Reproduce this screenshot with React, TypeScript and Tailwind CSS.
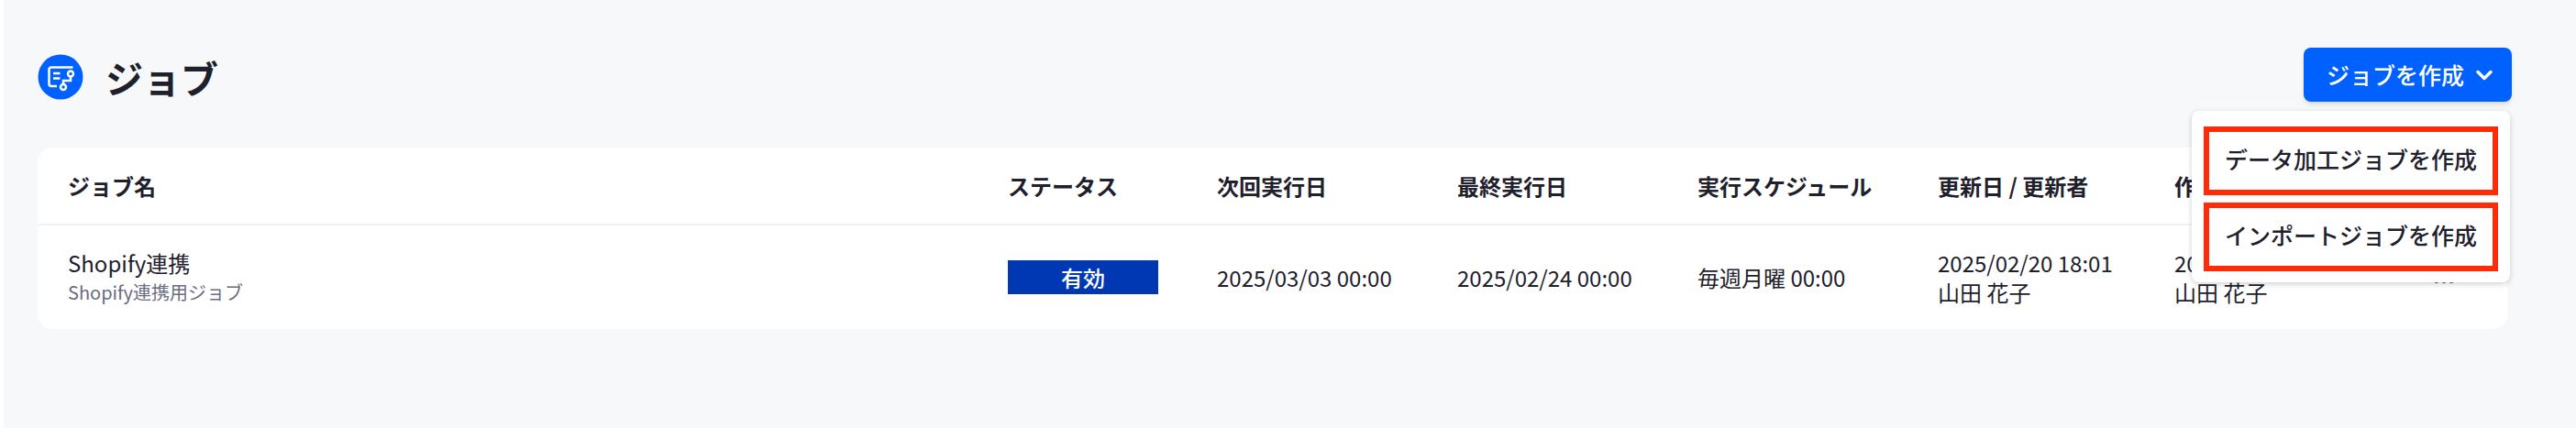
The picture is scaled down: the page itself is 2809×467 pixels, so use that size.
import React from 'react';
import { ChevronDown, Ellipsis } from 'lucide-react';

type Job = {
  id: number;
  name: string;
  description: string;
  status: string;
  nextRun: string;
  lastRun: string;
  schedule: string;
  updatedAt: string;
  updatedBy: string;
  createdAt: string;
  createdBy: string;
};

const jobs: Job[] = [
  {
    id: 1,
    name: 'Shopify連携',
    description: 'Shopify連携用ジョブ',
    status: '有効',
    nextRun: '2025/03/03 00:00',
    lastRun: '2025/02/24 00:00',
    schedule: '毎週月曜 00:00',
    updatedAt: '2025/02/20 18:01',
    updatedBy: '山田 花子',
    createdAt: '2025/02/20 18:01',
    createdBy: '山田 花子',
  },
];

const menuItems = ['データ加工ジョブを作成', 'インポートジョブを作成'];

const JobIcon: React.FC = () => (
  <svg className="size-[50px] shrink-0" viewBox="0 0 50 50" fill="none" aria-hidden="true">
    <circle cx="25" cy="25" r="24.5" fill="#0061ff" />
    <g stroke="#fff" strokeWidth="2.5">
      <path d="M38.500 14.500H15Q12.500 14.500 12.500 17V32.500Q12.500 35 15 35H21" />
      <path d="M17 21H24.500M17 26.500H24.500" />
      <circle cx="36" cy="21.500" r="3" />
      <circle cx="28" cy="36" r="3" />
      <path d="M36 24.500V29H28V33" />
    </g>
  </svg>
);

const CreateJobMenu: React.FC = () => (
  <div className="relative">
    <button
      type="button"
      aria-haspopup="menu"
      aria-expanded="true"
      className="flex h-[59px] items-center gap-2 rounded-lg bg-[#0061ff] pr-4 pl-[25px] text-[25px] font-medium text-white shadow-md"
    >
      ジョブを作成
      <ChevronDown className="size-7" strokeWidth={3} />
    </button>
    <div
      role="menu"
      className="absolute top-full right-0.5 z-10 mt-2.5 flex flex-col gap-2 rounded-lg bg-white px-[13px] pt-[17px] pb-3 shadow-[0_2px_6px_rgba(0,0,0,0.18)]"
    >
      {menuItems.map(item => (
        <button
          key={item}
          type="button"
          role="menuitem"
          className="h-[75px] border-6 border-[#ff2b06] px-[17px] pb-1 text-left text-[25px] font-medium whitespace-nowrap"
        >
          {item}
        </button>
      ))}
    </div>
  </div>
);

const JobTable: React.FC = () => (
  <table className="w-full table-fixed overflow-hidden rounded-2xl bg-white text-left text-2xl">
    <colgroup>
      <col />
      <col className="w-[228px]" />
      <col className="w-[262px]" />
      <col className="w-[262px]" />
      <col className="w-[262px]" />
      <col className="w-[258px]" />
      <col className="w-[276px]" />
      <col className="w-[120px]" />
    </colgroup>
    <thead>
      <tr className="h-[84px] border-b-2 border-[#f1f2f4] whitespace-nowrap *:pl-[33px] *:font-bold">
        <th>ジョブ名</th>
        <th>ステータス</th>
        <th>次回実行日</th>
        <th>最終実行日</th>
        <th>実行スケジュール</th>
        <th>更新日 / 更新者</th>
        <th>作成日 / 作成者</th>
        <th aria-label="操作" />
      </tr>
    </thead>
    <tbody>
      {jobs.map(job => (
        <tr key={job.id} className="h-[114px] whitespace-nowrap *:pl-[33px]">
          <td>
            <p>{job.name}</p>
            <p className="text-xl leading-8 text-[#6b6d80]">{job.description}</p>
          </td>
          <td>
            <span className="block w-[164px] bg-[#0037b3] text-center leading-[37px] font-medium text-white">
              {job.status}
            </span>
          </td>
          <td>{job.nextRun}</td>
          <td>{job.lastRun}</td>
          <td>{job.schedule}</td>
          <td>
            <p>{job.updatedAt}</p>
            <p>{job.updatedBy}</p>
          </td>
          <td>
            <p>{job.createdAt}</p>
            <p>{job.createdBy}</p>
          </td>
          <td>
            <button type="button" aria-label="メニュー" className="block pt-2 pl-1 text-[#6b6d80]">
              <Ellipsis className="size-7" />
            </button>
          </td>
        </tr>
      ))}
    </tbody>
  </table>
);

const App: React.FC = () => {
  return (
    <div className="min-h-screen border-l-4 border-white bg-[#f7f8fa] pt-[52px] pl-[37px] font-['Noto_Sans_CJK_JP','Noto_Sans',sans-serif] text-[#1e202c]">
      <header className="flex items-center justify-between pr-[70px]">
        <div className="flex items-center gap-6 pt-1">
          <JobIcon />
          <h1 className="text-[41px] leading-[54px] font-bold">ジョブ</h1>
        </div>
        <CreateJobMenu />
      </header>
      <main className="pt-[50px] pr-[75px]">
        <JobTable />
      </main>
    </div>
  );
};

export default App;
